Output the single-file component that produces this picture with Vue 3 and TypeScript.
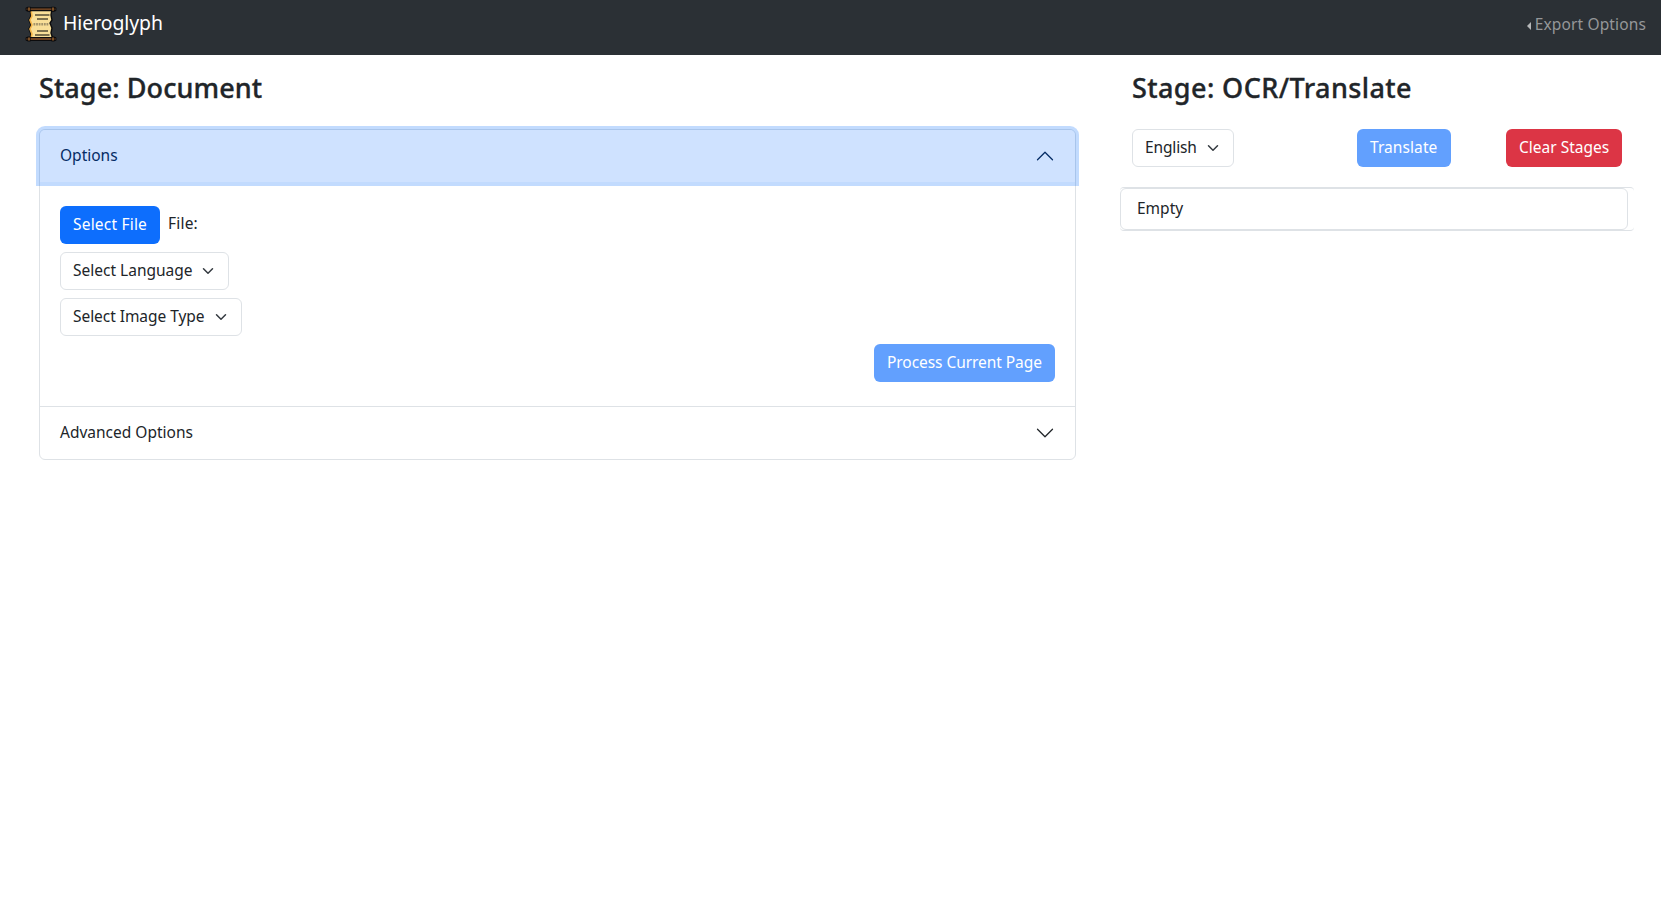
<script setup lang="ts">
import { ref } from 'vue'

const optionsOpen = ref(true)
const fileName = ref('')
</script>

<template>
  <div class="page">
    <nav class="navbar">
      <a class="brand">
        <svg class="logo" width="32" height="36" viewBox="0 0 32 36">
          <path d="M5 3H27L26 9L27 14L25 17L27 22L26 27L28 33H5L6 28L4 23L6 19L4 14L6 10Z" fill="#f8df98" stroke="#0b0b0d" stroke-width="1.4" />
          <path d="M6 4L7 10L5 14L7 19L5 23L7 28L6 32" fill="none" stroke="#f2b448" stroke-width="1.6" />
          <rect x="0.6" y="1.2" width="30.8" height="4" rx="1" fill="#0b0b0d" />
          <rect x="0.6" y="31" width="30.8" height="4" rx="1" fill="#0b0b0d" />
          <path d="M1.6 3.2H30.4M1.6 33H30.4" stroke="#8e5528" stroke-width="1.3" />
          <path d="M4 0.7V5.8M28 0.7V5.8M4 30.4V35.6M28 30.4V35.6" stroke="#0b0b0d" stroke-width="3.2" />
          <path d="M4 1.6V4.8M28 1.6V4.8M4 31.4V34.6M28 31.4V34.6" stroke="#b87332" stroke-width="1.3" />
          <path d="M10 9H24.5M12 13H23M12 25H23M10 29H24.5" stroke="#7c704d" stroke-width="2" />
          <path d="M8.5 18.3H24" stroke="#a4946a" stroke-width="2.4" stroke-dasharray="1.8 0.8" />
        </svg>
        <span class="brand-name">Hieroglyph</span>
      </a>
      <a class="export"><i class="caret"></i><span class="t-export">Export Options</span></a>
    </nav>

    <main class="stages">
      <section class="document">
        <h3><span class="t-doc">Stage: Document</span></h3>
        <div class="accordion">
          <div class="acc-head" :class="{ open: optionsOpen }" @click="optionsOpen = !optionsOpen">
            <span class="t-head">Options</span>
            <svg class="chevron" width="20" height="20" viewBox="0 0 16 16" fill="none"><path d="m2 5 6 6 6-6" /></svg>
          </div>
          <div v-if="optionsOpen" class="acc-body">
            <div class="file-row">
              <button class="btn primary w-file"><span class="t-file">Select File</span></button>
              <span class="file-label">File: {{ fileName }}</span>
            </div>
            <button class="btn select w-lang">
              <span>Select Language</span>
              <svg class="arrow" width="12" height="12" viewBox="0 0 16 16" fill="none"><path d="m2 5 6 6 6-6" /></svg>
            </button>
            <button class="btn select w-image">
              <span class="t-image">Select Image Type</span>
              <svg class="arrow" width="12" height="12" viewBox="0 0 16 16" fill="none"><path d="m2 5 6 6 6-6" /></svg>
            </button>
            <button class="btn primary disabled w-process" disabled><span class="t-process">Process Current Page</span></button>
          </div>
          <div class="acc-head last">
            <span class="t-head">Advanced Options</span>
            <svg class="chevron" width="20" height="20" viewBox="0 0 16 16" fill="none"><path d="m2 5 6 6 6-6" /></svg>
          </div>
        </div>
      </section>

      <section class="translate">
        <h3><span class="t-ocr">Stage: OCR/Translate</span></h3>
        <div class="toolbar">
          <button class="btn select w-english">
            <span class="t-english">English</span>
            <svg class="arrow" width="12" height="12" viewBox="0 0 16 16" fill="none"><path d="m2 5 6 6 6-6" /></svg>
          </button>
          <button class="btn primary disabled w-translate" disabled><span class="t-translate">Translate</span></button>
          <button class="btn danger w-clear"><span>Clear Stages</span></button>
        </div>
        <div class="results">
          <div class="item"><span>Empty</span></div>
        </div>
      </section>
    </main>
  </div>
</template>

<style>
body {
  margin: 0;
  background: #fff;
}
</style>

<style scoped>
.page {
  min-height: 914px;
  box-sizing: border-box;
  font-family: "Noto Sans", sans-serif;
  font-size: 15.5px;
  line-height: 24px;
  color: #212529;
  white-space: nowrap;
}
.page * {
  box-sizing: border-box;
}
.navbar {
  height: 55px;
  background: #2b3035;
  display: flex;
  justify-content: space-between;
  align-items: flex-start;
  padding: 6px 15px 0 25px;
}
.brand {
  display: flex;
  color: #fff;
}
.logo {
  display: block;
}
.brand-name {
  margin: 2px 0 0 6px;
  font-size: 19.4px;
  line-height: 30px;
  letter-spacing: -0.05px;
}
.export {
  display: flex;
  align-items: center;
  margin-top: 6px;
  color: #959799;
}
.caret {
  border: 4px solid transparent;
  border-right-color: #b5b7b9;
  border-left: 0;
  margin: 3px 4px 0 0;
}
.t-export {
  letter-spacing: 0.13px;
}
.stages {
  display: flex;
  padding-left: 39px;
}
h3 {
  margin: 0;
  height: 74px;
  padding-top: 16px;
  font-size: 27px;
  line-height: 34px;
  font-weight: 500;
  -webkit-text-stroke: 0.35px #212529;
}
.t-doc {
  letter-spacing: 0.08px;
}
.t-ocr {
  letter-spacing: 0.41px;
}
.document {
  width: 1037px;
}
.accordion {
  border: 1px solid #dee2e6;
  border-radius: 6px;
}
.acc-head {
  height: 52px;
  display: flex;
  align-items: center;
  justify-content: space-between;
  padding: 0 20px;
}
.t-head {
  padding-bottom: 2px;
}
.acc-head.open {
  position: relative;
  background: #cfe2ff;
  color: #052c65;
  border-radius: 5px 5px 0 0;
  box-shadow: 0 0 0 4px rgba(13, 110, 253, 0.25);
}
.acc-head.last {
  border-top: 1px solid #dee2e6;
  height: 53px;
}
.chevron,
.arrow {
  stroke: #212529;
  stroke-linecap: round;
  stroke-linejoin: round;
}
.arrow {
  stroke: #343a40;
  stroke-width: 2;
}
.open .chevron {
  stroke: #052c65;
  transform: rotate(180deg);
}
.acc-body {
  height: 224px;
  padding: 24px 20px 0;
  display: flex;
  flex-direction: column;
  align-items: flex-start;
  gap: 8px;
}
.file-row {
  display: flex;
  gap: 8px;
}
.file-label {
  padding-top: 5px;
  letter-spacing: 0.2px;
}
.btn {
  height: 38px;
  padding: 0 0 2px 12px;
  border: 1px solid transparent;
  border-radius: 6px;
  font: inherit;
  color: #fff;
  display: flex;
  align-items: center;
}
.select {
  justify-content: space-between;
  padding-right: 14px;
  background: #fff;
  border-color: #dee2e6;
  color: #212529;
}
.select .arrow {
  margin-top: 2px;
}
.primary {
  background: #0d6efd;
}
.primary.disabled {
  background: #62a0fe;
}
.danger {
  background: #dc3545;
}
.w-file { width: 100px; }
.w-lang { width: 169px; }
.w-image { width: 182px; }
.w-process { width: 181px; align-self: flex-end; }
.w-english { width: 102px; }
.w-translate { width: 94px; margin-left: 123px; }
.w-clear { width: 116px; margin-left: 55px; }
.t-file { letter-spacing: 0.2px; }
.t-image { letter-spacing: -0.05px; }
.t-process { letter-spacing: -0.06px; }
.t-english { letter-spacing: -0.15px; }
.t-translate { letter-spacing: 0.08px; }
.translate {
  margin-left: 44px;
  width: 514px;
}
.translate h3,
.toolbar {
  margin-left: 12px;
}
.toolbar {
  display: flex;
}
.results {
  margin-top: 20px;
  border-top: 1px solid #dee2e6;
  border-bottom: 1px solid #dee2e6;
  border-radius: 4px;
  height: 44px;
}
.item {
  width: 508px;
  height: 42px;
  border: 1px solid #dee2e6;
  border-radius: 6px;
  padding: 7px 16px;
}
</style>
